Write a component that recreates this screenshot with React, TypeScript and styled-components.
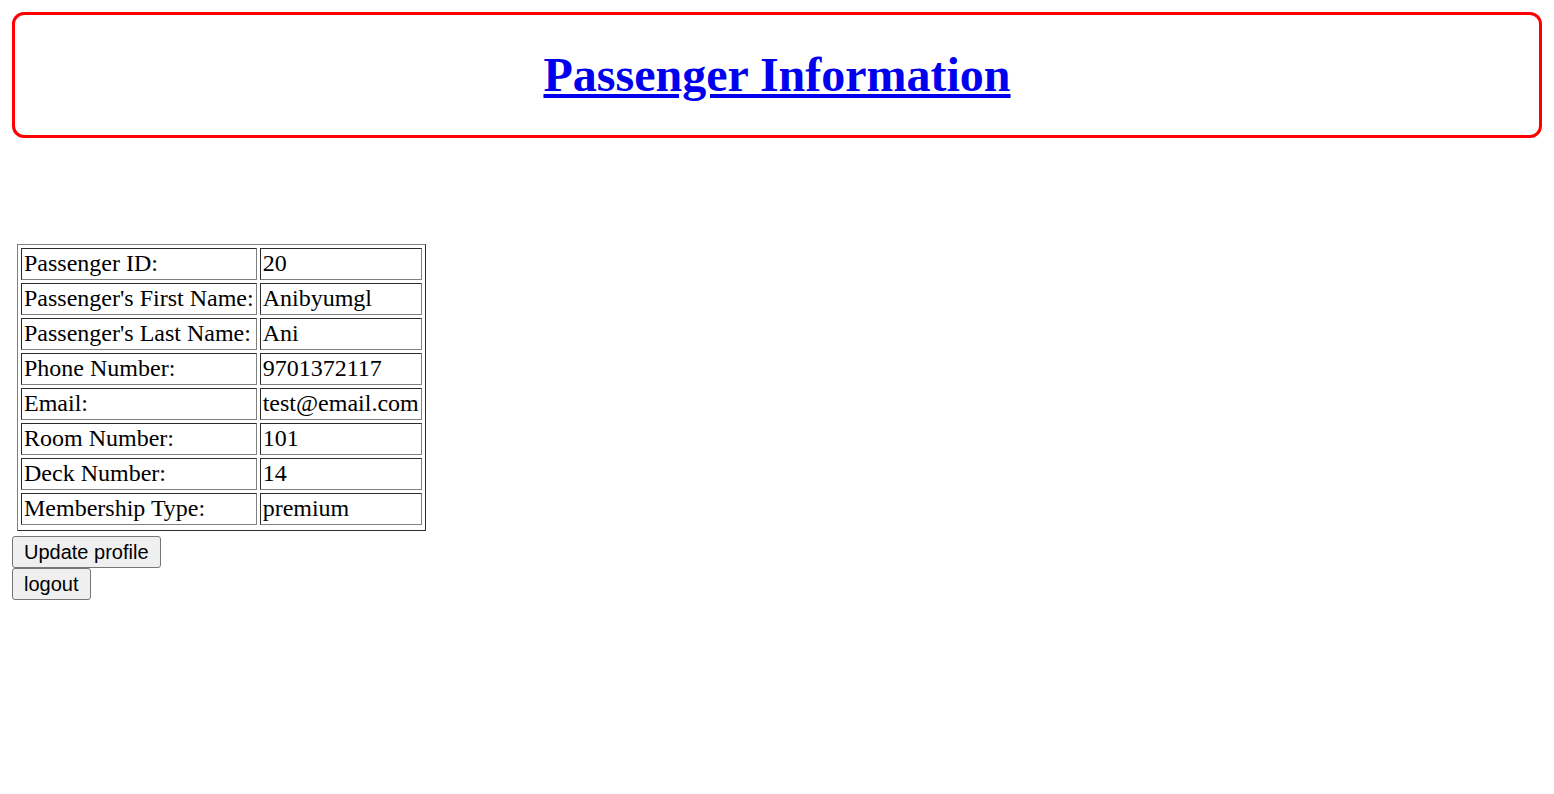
import React from "react";
import styled, { createGlobalStyle } from "styled-components";

const GlobalStyle = createGlobalStyle`
	html, body {
		margin: 0;
		padding: 0;
		background: #ffffff;
	}
	body {
		font-family: "Liberation Serif", "Times New Roman", serif;
		color: #000000;
	}
`;

const Page = styled.div`
	padding: 12px;
	display: flex;
	flex-direction: column;
	align-items: flex-start;
`;

const HeaderBox = styled.div`
	align-self: stretch;
	border: 3px solid #ff0000;
	border-radius: 12px;
	text-align: center;
`;

const Heading = styled.h1`
	margin: 32px 0;
	font-family: "Liberation Serif", "Times New Roman", serif;
	font-size: 48px;
	font-weight: bold;
	line-height: 56px;
`;

const HeadingLink = styled.a`
	color: #0000ee;
	text-decoration: underline;
`;

const InfoTable = styled.table`
	margin: 106px 0 5px 5px;
	padding-bottom: 2px;
	border: 1px outset gray;
	border-spacing: 3px;
	font-family: "Liberation Serif", "Times New Roman", serif;
	font-size: 24px;
`;

const Cell = styled.td`
	border: 1px inset gray;
	padding: 0 2px 2px;
	line-height: 28px;
	height: 28px;
	white-space: nowrap;
	text-align: left;
	vertical-align: middle;
`;

const ButtonStack = styled.div`
	display: flex;
	flex-direction: column;
	align-items: flex-start;
`;

const Button = styled.button`
	height: 32px;
	padding: 0 11px;
	margin: 0;
	border: 1px solid #767676;
	border-radius: 3px;
	background: #efefef;
	color: #000000;
	font-family: "Liberation Sans", Arial, sans-serif;
	font-size: 20px;
	line-height: 23px;
	cursor: pointer;
`;

const rows: [string, string][] = [
	["Passenger ID:", "20"],
	["Passenger's First Name:", "Anibyumgl"],
	["Passenger's Last Name:", "Ani"],
	["Phone Number:", "9701372117"],
	["Email:", "test@email.com"],
	["Room Number:", "101"],
	["Deck Number:", "14"],
	["Membership Type:", "premium"]
];

export default function App() {
	return (
		<>
			<GlobalStyle />
			<Page>
				<HeaderBox>
					<Heading>
						<HeadingLink href="#">Passenger Information</HeadingLink>
					</Heading>
				</HeaderBox>
				<InfoTable>
					<tbody>
						{rows.map(([label, value]) => (
							<tr key={label}>
								<Cell>{label}</Cell>
								<Cell>{value}</Cell>
							</tr>
						))}
					</tbody>
				</InfoTable>
				<ButtonStack>
					<Button>Update profile</Button>
					<Button>logout</Button>
				</ButtonStack>
			</Page>
		</>
	);
}
